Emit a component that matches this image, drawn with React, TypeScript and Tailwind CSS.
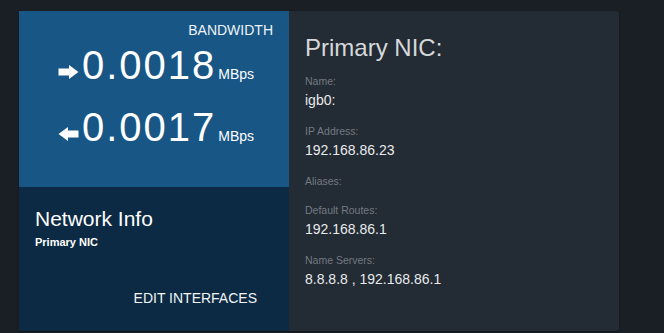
import React from "react";

type Row = { dir: "out" | "in"; value: string };

const rows: Row[] = [
  { dir: "out", value: "0.0018" },
  { dir: "in", value: "0.0017" },
];

const fields: { label: string; value?: string }[] = [
  { label: "Name:", value: "igb0:" },
  { label: "IP Address:", value: "192.168.86.23" },
  { label: "Aliases:" },
  { label: "Default Routes:", value: "192.168.86.1" },
  { label: "Name Servers:", value: "8.8.8.8 , 192.168.86.1" },
];

function Arrow({ dir }: { dir: "out" | "in" }) {
  // solid block arrow, flipped for inbound traffic
  return (
    <svg
      viewBox="0 0 20 14"
      className={`mb-[5px] mr-[3px] h-[14px] w-[21px] fill-white ${dir === "in" ? "-scale-x-100" : ""}`}
    >
      <path d="M0 3.4h10.5V0L20 7l-9.5 7v-3.4H0z" />
    </svg>
  );
}

export default function App() {
  return (
    <div className="min-h-[333px] bg-[#1a1f26] pl-[19px] pt-[11px] font-['Liberation_Sans',Arial,sans-serif]">
      <div className="flex h-[320px] w-[600px] rounded-r-[3px] shadow-[0_1px_2px_rgba(0,0,0,0.35)]">
        {/* Left column: bandwidth + network info */}
        <div className="flex w-[270px] flex-col">
          <div className="h-[176px] bg-[#175685] px-4 pt-[9px] text-white">
            <div className="text-right text-[14px] leading-5 text-[#eef2f6]">BANDWIDTH</div>
            <div className="mt-[1px] flex flex-col gap-[14px]">
              {rows.map((r) => (
                <div key={r.value} className="flex items-baseline justify-center pl-[4px]">
                  <Arrow dir={r.dir} />
                  <span className="text-[40px] leading-[48px] tracking-[2px]">{r.value}</span>
                  <span className="ml-[2px] text-[14px] leading-5">MBps</span>
                </div>
              ))}
            </div>
          </div>
          <div className="flex flex-1 flex-col bg-[#0c2a43] pb-[23px] pl-4 pt-[19px] text-white">
            <div className="text-[21px] leading-[25px]">Network Info</div>
            <div className="mt-1 text-[11px] font-bold leading-[15px]">Primary NIC</div>
            <button className="mr-8 mt-auto self-end text-[14px] leading-5 text-[#f2f4f6]">
              EDIT INTERFACES
            </button>
          </div>
        </div>

        {/* Right column: primary NIC details */}
        <div className="flex-1 rounded-r-[3px] bg-[#232b34] pl-4 pt-[22px]">
          <div className="text-[24px] leading-[29px] text-[#d6d8da]">Primary NIC:</div>
          <div className="mt-[11px] flex flex-col gap-[13px]">
            {fields.map((f) => (
              <div key={f.label} className="flex flex-col">
                <div className="text-[10.5px] leading-4 text-[#737a82]">{f.label}</div>
                {f.value && (
                  <div className="mt-[2px] text-[14px] leading-[19px] text-[#e8eaec]">{f.value}</div>
                )}
              </div>
            ))}
          </div>
        </div>
      </div>
    </div>
  );
}
